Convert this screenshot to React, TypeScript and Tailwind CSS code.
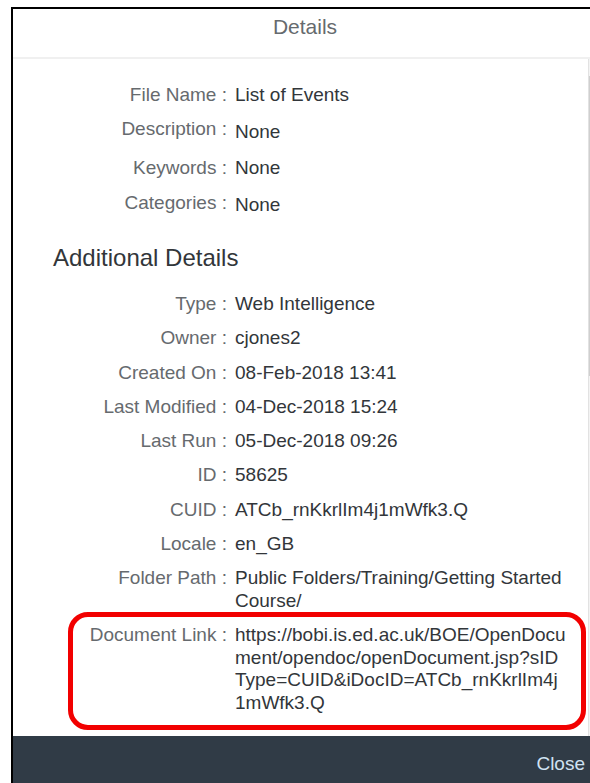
import type { ReactNode } from 'react';

type Row = {
  label: string;
  value: ReactNode;
  labelNudge?: string;
};

const GENERAL: Row[] = [
  { label: 'File Name', value: 'List of Events' },
  { label: 'Description', value: 'None', labelNudge: '-mt-[3px]' },
  { label: 'Keywords', value: 'None' },
  { label: 'Categories', value: 'None', labelNudge: '-mt-[2px]' },
];

const ADDITIONAL: Row[] = [
  { label: 'Type', value: 'Web Intelligence' },
  { label: 'Owner', value: 'cjones2' },
  { label: 'Created On', value: '08-Feb-2018 13:41' },
  { label: 'Last Modified', value: '04-Dec-2018 15:24' },
  { label: 'Last Run', value: '05-Dec-2018 09:26' },
  { label: 'ID', value: '58625' },
  { label: 'CUID', value: 'ATCb_rnKkrlIm4j1mWfk3.Q' },
  { label: 'Locale', value: 'en_GB' },
  { label: 'Folder Path', value: 'Public Folders/Training/Getting Started Course/' },
];

// the open-document URL, chunked the way the dialog wraps it
const DOC_LINK_LINES = [
  'https://bobi.is.ed.ac.uk/BOE/OpenDocu',
  'ment/opendoc/openDocument.jsp?sID',
  'Type=CUID&iDocID=ATCb_rnKkrlIm4j',
  '1mWfk3.Q',
];

function PropRow({ row, children }: { row: Row; children?: ReactNode }) {
  return (
    <div className="relative flex items-start leading-[22.5px]">
      <div className={`w-[214px] shrink-0 text-right text-[#666a6e] ${row.labelNudge ?? ''}`}>
        {row.label} :
      </div>
      <div className="ml-[8px] w-[330px] text-[#32363a]">{row.value}</div>
      {children}
    </div>
  );
}

export default function App() {
  const docLink = (
    <>
      {DOC_LINK_LINES.map((l) => (
        <span key={l} className="block whitespace-nowrap">
          {l}
        </span>
      ))}
    </>
  );

  return (
    <div className="h-[783px] w-[590px] overflow-hidden bg-white pl-[11px] pt-[7px] font-['Liberation_Sans',Arial,sans-serif] text-[19px]">
      <div className="flex h-[785px] w-[586px] flex-col border-l-2 border-t-2 border-black">
        {/* Dialog title */}
        <div className="h-[50px] shrink-0 border-b-2 border-[#f0f0f0] pt-[5px] text-center text-[21px] leading-[26px] text-[#666a6e]">
          Details
        </div>

        <div className="flex min-h-0 flex-1">
          <div className="w-[575px] pt-[25px]">
            <div className="flex flex-col gap-[14px]">
              {GENERAL.map((r) => (
                <PropRow key={r.label} row={r} />
              ))}
            </div>

            <h2 className="mt-[28px] pl-[40px] text-[24px] leading-[28px] text-[#32363a]">
              Additional Details
            </h2>

            <div className="mt-[21px] flex flex-col gap-[11.8px]">
              {ADDITIONAL.map((r) => (
                <PropRow key={r.label} row={r} />
              ))}
              <PropRow row={{ label: 'Document Link', value: docLink }}>
                <div className="pointer-events-none absolute -top-[12px] left-[55px] h-[118px] w-[518px] rounded-[20px] border-[5px] border-[#f20000]" />
              </PropRow>
            </div>
          </div>
          <div className="w-[9px] border-l border-[#e2e2e2] bg-[#f3f3f3] pt-[17px]">
            <div className="h-[300px] bg-[#cfcfcf]" />
          </div>
        </div>

        {/* Footer */}
        <div className="flex h-[56px] shrink-0 items-center justify-end bg-[#303b46] pr-[12px]">
          <button className="text-[19px] leading-[22px] text-[#cfe2f3]">Close</button>
        </div>
      </div>
    </div>
  );
}
